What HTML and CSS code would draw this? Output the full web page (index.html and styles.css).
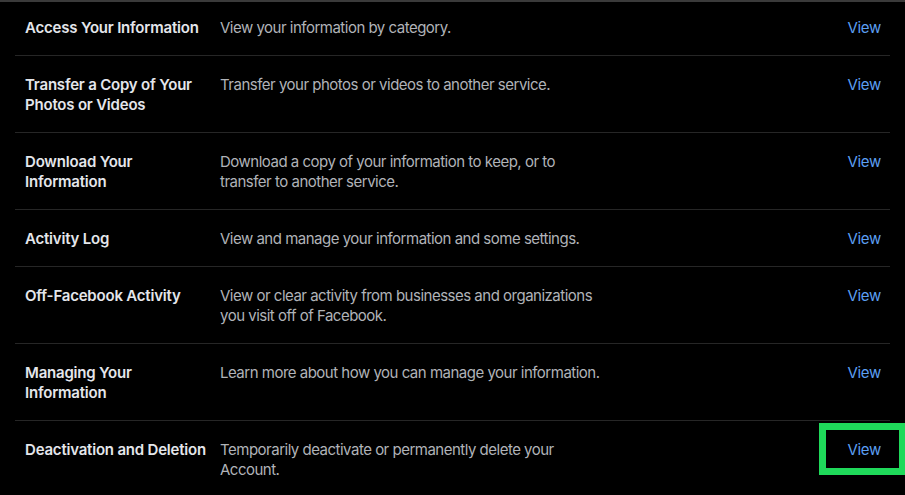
FILE: index.html
```html
<!DOCTYPE html>
<html>
<head>
<meta charset="utf-8">
<link rel="stylesheet" href="styles.css">
</head>
<body>
<div class="topbar"></div>
<div class="list">
  <div class="row">
    <div class="title">Access Your Information</div>
    <div class="desc">View your information by category.</div>
    <a class="view">View</a>
  </div>
  <div class="row">
    <div class="title">Transfer a Copy of Your Photos or Videos</div>
    <div class="desc">Transfer your photos or videos to another service.</div>
    <a class="view">View</a>
  </div>
  <div class="row">
    <div class="title">Download Your Information</div>
    <div class="desc">Download a copy of your information to keep, or to transfer to another service.</div>
    <a class="view">View</a>
  </div>
  <div class="row">
    <div class="title">Activity Log</div>
    <div class="desc">View and manage your information and some settings.</div>
    <a class="view">View</a>
  </div>
  <div class="row">
    <div class="title">Off-Facebook Activity</div>
    <div class="desc">View or clear activity from businesses and organizations you visit off of Facebook.</div>
    <a class="view">View</a>
  </div>
  <div class="row">
    <div class="title">Managing Your Information</div>
    <div class="desc">Learn more about how you can manage your information.</div>
    <a class="view">View</a>
  </div>
  <div class="row">
    <div class="title">Deactivation and Deletion</div>
    <div class="desc">Temporarily deactivate or permanently delete your Account.</div>
    <a class="view highlight">View</a>
  </div>
</div>
</body>
</html>
```

FILE: styles.css
```css
html, body {
  margin: 0;
  padding: 0;
  background: #000;
  height: 100%;
  overflow: hidden;
}
body {
  font-family: Inter, "Liberation Sans", sans-serif;
  font-size: 15px;
  line-height: 20px;
}
.topbar {
  height: 2px;
  background: #3a3a3a;
}
.list {
  margin: 0 15px;
}
.row {
  display: flex;
  align-items: flex-start;
  padding: 19px 9px 17px 10px;
  border-top: 1px solid #262626;
}
.row:first-child {
  border-top: none;
  padding-top: 16px;
}
.title {
  width: 186px;
  margin-right: 9px;
  flex: none;
  color: #e4e6eb;
  font-weight: 600;
  letter-spacing: -0.2px;
}
.desc {
  width: 385px;
  color: #b0b3b8;
  letter-spacing: -0.5px;
}
.view {
  margin-left: auto;
  color: #5c9ff2;
  position: relative;
  letter-spacing: -0.3px;
}
.highlight::after {
  content: "";
  position: absolute;
  left: -28px;
  top: -17px;
  width: 73px;
  height: 38px;
  border: 7px solid #1fd95a;
}
```
